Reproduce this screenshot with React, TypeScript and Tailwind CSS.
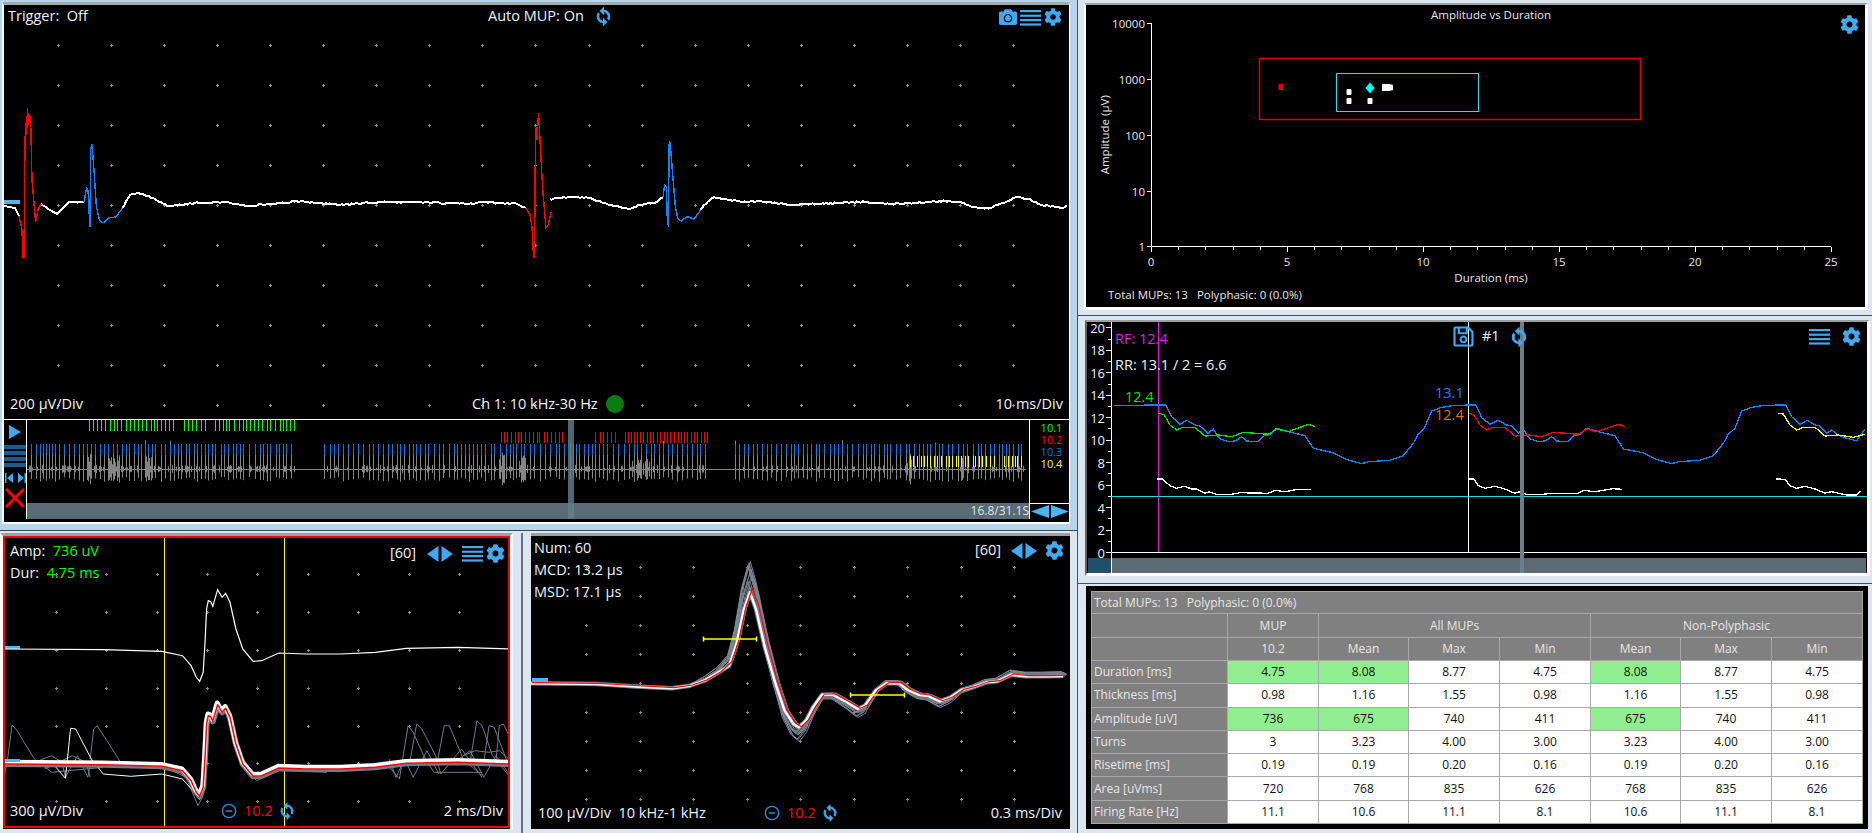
import { FaCamera, FaCog, FaRegSave } from 'react-icons/fa'
import { FiMinusCircle } from 'react-icons/fi'

type Pt = [number, number]

// zoomed crop coords -> page coords
const mapPts = (pts: number[][], ox: number, oy: number, sx: number, sy = 3): Pt[] =>
  pts.map(([x, y]) => [ox + x / sx, oy + y / sy] as Pt)

const toPath = (pts: Pt[]) =>
  pts.map(([x, y], i) => `${i ? 'L' : 'M'}${x.toFixed(1)} ${y.toFixed(1)}`).join('')

function rng(seed: number) {
  let s = seed
  return () => {
    s = (s + 0x6d2b79f5) | 0
    let t = Math.imul(s ^ (s >>> 15), 1 | s)
    t = (t + Math.imul(t ^ (t >>> 7), 61 | t)) ^ t
    return ((t ^ (t >>> 14)) >>> 0) / 4294967296
  }
}

// break a polyline into short noisy steps, gives the sampled look of the trace
function roughen(pts: Pt[], step: number, amp: number, seed: number): Pt[] {
  const r = rng(seed)
  const out: Pt[] = []
  for (let i = 0; i < pts.length - 1; i++) {
    const [x0, y0] = pts[i]
    const [x1, y1] = pts[i + 1]
    const n = Math.max(1, Math.round((x1 - x0) / step))
    for (let k = 0; k < n; k++) {
      const t = k / n
      out.push([x0 + (x1 - x0) * t, y0 + (y1 - y0) * t + (k ? (r() - 0.5) * amp : 0)])
    }
  }
  out.push(pts[pts.length - 1])
  return out
}

const BLUE = '#42a8f0'

function Dots({ xs, ys }: { xs: number[]; ys: number[] }) {
  let d = ''
  xs.forEach((x) => ys.forEach((y) => {
    const px = Math.round(x) + 0.5
    const py = Math.round(y) + 0.5
    d += `M${px - 1.5} ${py}h3M${px} ${py - 1.5}v3`
  }))
  return <path d={d} stroke="#8a8a8a" strokeWidth={1} fill="none" />
}

function MenuIcon({ w = 21 }: { w?: number }) {
  return (
    <svg width={w} height={17} viewBox="0 0 21 17" fill={BLUE}>
      <rect y="1" width="21" height="2.2" />
      <rect y="5.6" width="21" height="2.2" />
      <rect y="10" width="21" height="2.2" />
      <rect y="14.4" width="21" height="2.2" />
    </svg>
  )
}

function LeftRight({ className = '' }: { className?: string }) {
  return (
    <svg width={26} height={16} viewBox="0 0 26 16" fill={BLUE} className={className}>
      <path d="M0 8 11.5 0v16z" />
      <path d="M14.5 0 26 8 14.5 16z" />
    </svg>
  )
}

function SyncIcon({ size = 18, className = '' }: { size?: number; className?: string }) {
  return (
    <svg width={size} height={size} viewBox="2 0 20 24" fill={BLUE} stroke={BLUE} strokeWidth={1.3} className={className}>
      <path d="M12 4V1L8 5l4 4V6c3.31 0 6 2.69 6 6 0 1.01-.25 1.97-.7 2.8l1.46 1.46C19.54 15.03 20 13.57 20 12c0-4.42-3.58-8-8-8zm0 14c-3.31 0-6-2.69-6-6 0-1.01.25-1.97.7-2.8L5.24 7.74C4.46 8.97 4 10.43 4 12c0 4.42 3.58 8 8 8v3l4-4-4-4v3z" />
    </svg>
  )
}

function range(start: number, step: number, n: number) {
  return Array.from({ length: n }, (_, i) => start + i * step)
}

/* ---------- main raw signal ---------- */

const mainWhite1 = roughen(
  [[41, 204], [50, 210], [57, 214], [63, 208], [69, 202], [84, 202]],
  1.6, 1, 2,
)
const mainWhite2 = roughen(
  [[122.5, 208], [130, 195], [138, 193], [153, 198], [168, 206], [199, 203], [226, 202], [249, 206], [302, 201], [340, 205], [383, 202], [413, 202], [467, 204], [482, 202], [517, 204], [526, 208]],
  2, 1.6, 3,
)
const mainWhite3 = roughen(
  mapPts(
    [[-120, 238], [-60, 230], [0, 233], [40, 248], [70, 258], [120, 267], [150, 255], [200, 245], [218, 232]],
    590, 120, 2.985,
  ),
  2, 1.4, 4,
)
const mainWhite4 = roughen(
  mapPts(
    [[330, 270], [340, 255], [370, 232], [400, 237], [450, 245], [520, 245], [600, 254], [700, 251], [820, 245], [900, 253], [1060, 243], [1110, 248], [1140, 260], [1190, 266], [1230, 250], [1270, 232], [1310, 238], [1350, 255], [1410, 264], [1433, 255]],
    590, 120, 2.985,
  ),
  2, 1.6, 5,
)
const mainLead: Pt[] = [[4, 206], [15, 208], [19, 216]]
const mainRed1: Pt[] = [[19, 216], [22, 230], [23, 257], [24, 257], [25, 140], [26, 123], [26.6, 135], [27.5, 108], [28.5, 125], [29.5, 116], [30.6, 118], [32, 180], [33.7, 200], [35.6, 222], [38, 210], [41, 204]]
const mainRed2: Pt[] = [[526, 208], [530, 215], [532, 227], [533.5, 257], [534.5, 257], [535.5, 130], [536.5, 127], [537, 140], [538.5, 113], [539.5, 130], [540.5, 150], [543, 193], [546, 228], [548, 226], [551, 212]]
const mainBlue1: Pt[] = [[84, 202], [86.5, 188], [88, 190], [89, 210], [90, 227], [90.6, 150], [92, 144], [94, 170], [96.4, 207], [99.5, 220], [103, 223], [109, 218], [116, 217], [122.5, 208]]
const mainBlue2 = mapPts(
  [[218, 232], [223, 195], [228, 200], [231, 310], [234, 315], [236, 75], [239, 65], [243, 115], [248, 180], [255, 260], [262, 295], [272, 303], [290, 290], [310, 297], [330, 270]],
  590, 120, 2.985,
)

/* ---------- firing strip ---------- */

function makeTicks(ranges: number[][], step: number, jitter: number, seed: number) {
  const r = rng(seed)
  const out: number[] = []
  ranges.forEach(([a, b]) => {
    let x = a
    while (x <= b) {
      out.push(Math.round(x))
      x += step + r() * jitter
    }
  })
  return out
}

const ticksD = (xs: number[], y0: number, y1: number) => xs.map((x) => `M${x + 0.5} ${y0}V${y1}`).join('')

const greenTicks = makeTicks([[90, 175], [185, 208], [216, 298]], 3, 2, 11)
const redTicks = makeTicks([[502, 512], [516, 528], [530, 566], [596, 604], [608, 616], [626, 708]], 2.6, 2, 12)
const blueTicks = makeTicks([[32, 297], [325, 708], [736, 1025]], 3, 2.8, 13)
const yellowTicks = makeTicks([[911, 996], [1005, 1025]], 2.6, 2, 14)

const grayLines = (() => {
  const r = rng(21)
  let d = ''
  blueTicks.forEach((x) => {
    const top = r() < 0.06 ? 441 + r() * 8 : 456
    const bot = 478 + r() * 5
    d += `M${x + 0.5} ${top}V${bot}`
  })
  // busy stretches around the zero line
  const clump = (a: number, b: number, n: number, amp: number) => {
    for (let i = 0; i < n; i++) {
      const x = Math.round(a + r() * (b - a)) + 0.5
      const h = 1 + r() * amp
      d += `M${x} ${470 - h}V${470 + h}`
    }
  }
  clump(30, 297, 120, 3)
  clump(325, 708, 120, 3)
  clump(736, 1025, 70, 2.5)
  clump(88, 94, 10, 16)
  clump(110, 120, 16, 13)
  clump(146, 152, 10, 14)
  clump(500, 506, 10, 16)
  clump(520, 528, 10, 13)
  clump(630, 650, 20, 10)
  clump(908, 914, 8, 18)
  clump(960, 970, 8, 12)
  return d
})()

/* ---------- unit panel ---------- */

const unitTop = mapPts(
  [[12, 360], [300, 362], [470, 367], [530, 380], [555, 410], [570, 445], [580, 457], [590, 430], [596, 330], [600, 240], [605, 215], [612, 218], [618, 232], [632, 182], [645, 205], [655, 193], [668, 220], [685, 300], [705, 360], [735, 397], [760, 395], [810, 372], [890, 375], [990, 375], [1090, 370], [1180, 358], [1330, 355], [1478, 360]],
  0, 530, 2.904,
)
const unitLow = unitTop.map(([x, y]) => [x, y + 115] as Pt)
const unitLowWhite = unitTop.map(([x, y]) => [x - 0.5, y + 113] as Pt)
const unitOutliers = [
  [[12, 745], [22, 690], [35, 588], [50, 605], [70, 640], [100, 690], [150, 730], [300, 715]],
  [[262, 690], [272, 600], [282, 590], [320, 650], [350, 700], [430, 715]],
  [[100, 700], [150, 680], [180, 700], [190, 745], [225, 680], [255, 745], [265, 690]],
  [[1120, 700], [1160, 750], [1185, 590], [1200, 610], [1230, 680], [1260, 730], [1400, 730]],
  [[1190, 700], [1210, 585], [1225, 600], [1265, 680], [1280, 735], [1340, 660], [1400, 745]],
  [[1270, 700], [1290, 590], [1305, 590], [1345, 690], [1400, 740]],
  [[1365, 700], [1385, 575], [1400, 590], [1430, 680], [1478, 740]],
  [[1405, 700], [1420, 590], [1435, 595], [1470, 690], [1478, 700]],
  [[1440, 700], [1450, 590], [1462, 585], [1478, 620]],
  [[1345, 680], [1380, 665], [1420, 670], [1450, 665], [1478, 690]],
  [[1130, 690], [1150, 745], [1175, 690], [1200, 745], [1240, 665], [1275, 735]],
  [[1320, 700], [1365, 665], [1405, 745], [1440, 680], [1478, 735]],
  [[130, 720], [210, 680], [250, 700], [262, 745]],
  [[480, 715], [540, 745], [575, 830], [590, 800]],
  [[660, 560], [680, 640], [700, 700], [745, 755], [810, 725], [950, 730]],
].map((l) => mapPts(l, 0, 530, 2.904))
const unitWhiteSpike = mapPts([[150, 700], [190, 748], [205, 598], [220, 600], [240, 640], [265, 690], [300, 735], [380, 742], [470, 735], [530, 750], [560, 785], [580, 812]], 0, 530, 2.904)

/* ---------- raster panel ---------- */

const rasterZ = [[30, 458], [220, 460], [340, 468], [430, 473], [480, 465], [520, 450], [560, 425], [590, 395], [610, 330], [630, 230], [648, 175], [665, 225], [690, 340], [720, 460], [745, 540], [770, 580], [785, 590], [805, 570], [825, 530], [850, 492], [880, 492], [920, 515], [950, 535], [970, 525], [1000, 480], [1030, 458], [1065, 458], [1090, 478], [1120, 492], [1145, 495], [1180, 512], [1210, 500], [1240, 478], [1270, 470], [1310, 455], [1340, 452], [1380, 432], [1420, 437], [1470, 437], [1525, 436]]
const rasterRed = mapPts(rasterZ, 520, 530, 2.8)
const rasterWhite = mapPts(rasterZ.map(([x, y]) => [x - 7, y < 400 ? y + 12 : y + 2]), 520, 530, 2.8)
const rasterGhosts = range(0, 1, 16).map((i) => {
  const r = rng(40 + i)
  const k = 0.96 + (i / 15) * 0.34
  const dx = (r() - 0.5) * 18 - 5
  const dy = (r() - 0.5) * 12
  return mapPts(rasterZ.map(([x, y]) => [x + dx, 458 + (y - 458) * k + dy * (x > 500 ? 1 : 0.2)]), 520, 530, 2.8)
})

/* ---------- trend panel ---------- */

const trendBlue = [
  ...mapPts([[117, 272], [205, 272], [208, 270], [272, 270], [290, 305], [315, 328], [335, 316], [360, 330], [375, 333], [398, 355], [415, 343], [435, 372], [460, 380], [480, 378], [500, 365], [515, 378], [550, 380], [565, 363], [585, 358], [605, 340], [640, 350], [690, 362], [715, 400], [775, 413], [810, 432], [860, 446], [880, 440], [945, 436], [985, 422], [1015, 385], [1030, 358], [1048, 340], [1070, 288], [1100, 277], [1140, 271]], 1075, 315, 3),
  ...mapPts([[78, 270], [95, 308], [120, 328], [145, 316], [170, 330], [185, 333], [205, 355], [220, 343], [240, 372], [265, 380], [285, 378], [305, 365], [320, 378], [355, 380], [370, 363], [390, 358], [410, 340], [445, 350], [495, 362], [520, 402], [580, 413], [615, 432], [665, 446], [685, 440], [750, 436], [790, 422], [820, 385], [835, 358], [855, 340], [875, 288], [905, 277], [945, 271], [1008, 270], [1025, 305], [1050, 328], [1072, 316], [1095, 330], [1110, 333], [1130, 355], [1145, 345], [1165, 360], [1190, 370], [1220, 377], [1245, 342]], 1450, 315, 3),
]
const trendGreen = mapPts([[252, 295], [268, 300], [285, 330], [305, 345], [320, 338], [360, 338], [390, 363], [430, 360], [470, 365], [505, 352], [580, 358], [605, 342], [640, 350], [700, 328], [720, 335]], 1075, 315, 3)
const trendRed = mapPts([[57, 295], [72, 300], [90, 330], [110, 345], [125, 338], [165, 338], [195, 363], [235, 360], [275, 365], [310, 352], [385, 358], [410, 342], [440, 350], [505, 328], [525, 335]], 1450, 315, 3)
const trendYellow = mapPts([[985, 295], [1000, 297], [1020, 330], [1040, 345], [1060, 337], [1095, 337], [1125, 363], [1165, 360], [1210, 367], [1245, 358]], 1450, 315, 3)
const trendWhite = [
  mapPts([[247, 492], [262, 492], [285, 512], [305, 520], [328, 514], [350, 522], [365, 522], [390, 535], [402, 530], [425, 538], [470, 538], [495, 533], [580, 535], [600, 526], [630, 530], [670, 523], [707, 523]], 1075, 315, 3),
  mapPts([[57, 492], [72, 492], [85, 512], [105, 520], [135, 514], [165, 522], [195, 535], [210, 530], [230, 538], [280, 538], [305, 535], [385, 535], [400, 526], [435, 530], [490, 521], [515, 523]], 1450, 315, 3),
  mapPts([[978, 492], [1005, 493], [1020, 512], [1040, 520], [1065, 514], [1095, 522], [1125, 534], [1145, 530], [1190, 540], [1220, 540], [1232, 528]], 1450, 315, 3),
]

/* ---------- table ---------- */

const rows = [
  { label: 'Duration [ms]', v: ['4.75', '8.08', '8.77', '4.75', '8.08', '8.77', '4.75'], green: true },
  { label: 'Thickness [ms]', v: ['0.98', '1.16', '1.55', '0.98', '1.16', '1.55', '0.98'] },
  { label: 'Amplitude [uV]', v: ['736', '675', '740', '411', '675', '740', '411'], green: true },
  { label: 'Turns', v: ['3', '3.23', '4.00', '3.00', '3.23', '4.00', '3.00'] },
  { label: 'Risetime [ms]', v: ['0.19', '0.19', '0.20', '0.16', '0.19', '0.20', '0.16'] },
  { label: 'Area [uVms]', v: ['720', '768', '835', '626', '768', '835', '626'] },
  { label: 'Firing Rate [Hz]', v: ['11.1', '10.6', '11.1', '8.1', '10.6', '11.1', '8.1'] },
]

function MupTable() {
  const head = 'border border-[#a8a8a8] bg-[#808080] text-center font-normal text-[#e6e6e6]'
  const cell = 'border border-[#a8a8a8] text-center text-[#111]'
  return (
    <table className="w-full table-fixed border-collapse text-[12px] leading-none">
      <colgroup>
        <col className="w-[136px]" />
        <col className="w-[91px]" />
        <col className="w-[90px]" />
        <col className="w-[91px]" />
        <col className="w-[91px]" />
        <col className="w-[90px]" />
        <col className="w-[91px]" />
        <col />
      </colgroup>
      <tbody>
        <tr className="h-[22px]">
          <td colSpan={8} className="border border-[#a8a8a8] bg-[#808080] pl-[2px] text-[#e6e6e6]">
            Total MUPs: 13 &nbsp; Polyphasic: 0 (0.0%)
          </td>
        </tr>
        <tr className="h-[24px]">
          <td className={head} />
          <td className={head}>MUP</td>
          <td colSpan={3} className={head}>All MUPs</td>
          <td colSpan={3} className={head}>Non-Polyphasic</td>
        </tr>
        <tr className="h-[23px]">
          <td className={head} />
          <td className={head}>10.2</td>
          <td className={head}>Mean</td>
          <td className={head}>Max</td>
          <td className={head}>Min</td>
          <td className={head}>Mean</td>
          <td className={head}>Max</td>
          <td className={head}>Min</td>
        </tr>
        {rows.map((row) => (
          <tr key={row.label} className="h-[23.3px]">
            <td className="border border-[#a8a8a8] bg-[#808080] pl-[2px] text-[#e6e6e6]">{row.label}</td>
            {row.v.map((val, i) => (
              <td
                key={i}
                className={`${cell} ${row.green && (i === 0 || i === 1 || i === 4) ? 'bg-[#90ee90]' : 'bg-white'}`}
              >
                {val}
              </td>
            ))}
          </tr>
        ))}
      </tbody>
    </table>
  )
}

/* ---------- page ---------- */

export default function App() {
  const bigDotsX = range(57.5, 53.1, 19)
  const bigDotsY = range(44.5, 40, 10)

  return (
    <div className="flex h-[833px] w-[1872px] overflow-hidden bg-[#dce6f1] font-['Open_Sans',sans-serif] text-[14.5px] leading-none text-[#eef3f8]">
      {/* left side */}
      <div className="flex w-[1078px] flex-col border-r border-[#46515b]">
        <div className="h-[531px] border-b border-[#3f4a54] bg-[#b8d6ea] pl-[2px] pt-[2px]">
          <div className="h-[522px] w-[1068px] border-t-[3px] border-r-[1px] border-b-[2px] border-l-[2px] border-t-[#a8a8a8] border-r-white border-b-white border-l-white bg-black">
            {/* scope */}
            <div className="relative h-[415px] border-b border-white">
              <svg width={1063} height={414} viewBox="4 5 1063 414" className="block">
                <Dots xs={bigDotsX} ys={bigDotsY} />
                <g fill="none" shapeRendering="crispEdges">
                  <path d={toPath(mainLead)} stroke="#fff" strokeWidth={2} />
                  <path d={toPath(mainWhite1)} stroke="#fff" strokeWidth={2} />
                  <path d={toPath(mainWhite2)} stroke="#fff" strokeWidth={2} />
                  <path d={toPath(mainWhite3)} stroke="#fff" strokeWidth={2} />
                  <path d={toPath(mainWhite4)} stroke="#fff" strokeWidth={2} />
                  <path d={toPath(mainRed1)} stroke="#ff0000" strokeWidth={1.4} />
                  <path d={toPath(mainRed2)} stroke="#ff0000" strokeWidth={1.4} />
                  <path d={toPath(mainBlue1)} stroke="#0a84ff" strokeWidth={1.4} />
                  <path d={toPath(mainBlue2)} stroke="#0a84ff" strokeWidth={1.4} />
                </g>
                <rect x="4" y="200" width="16" height="4" fill="#55b4f5" />
              </svg>
              <div className="absolute inset-0 flex flex-col justify-between">
                <div className="flex items-start px-[4px] pt-[4px]">
                  <span className="w-[480px]">Trigger: &nbsp;Off</span>
                  <span>Auto MUP: On</span>
                  <SyncIcon size={19} className="ml-[10px] -mt-[2px]" />
                  <div className="ml-auto mr-[3px] -mt-[1px] flex items-center gap-[3px]">
                    <FaCamera size={18} color={BLUE} />
                    <MenuIcon />
                    <FaCog size={18} color={BLUE} />
                  </div>
                </div>
                <div className="flex items-center px-[6px] pb-[6px]">
                  <span className="w-[462px]">200 µV/Div</span>
                  <span>Ch 1: 10 kHz-30 Hz</span>
                  <span className="ml-[8px] h-[18px] w-[18px] rounded-full bg-[#0b7d10]" />
                  <span className="ml-auto">10 ms/Div</span>
                </div>
              </div>
            </div>
            {/* firing strip */}
            <div className="flex h-[99px]">
              <div className="flex w-[23px] flex-col items-center border-r border-white">
                <svg width={14} height={16} viewBox="0 0 14 16" className="mt-[4px]" fill={BLUE}>
                  <path d="M1 1 13 8 1 15z" />
                </svg>
                <svg width={22} height={22} viewBox="0 0 22 22" className="mt-[5px]" fill="#1a5a8c">
                  <rect y="0" width="22" height="4" />
                  <rect y="6" width="22" height="4" />
                  <rect y="12" width="22" height="4" />
                  <rect y="18" width="22" height="4" />
                </svg>
                <svg width={21} height={12} viewBox="0 0 21 12" className="mt-[5px]" fill={BLUE}>
                  <rect x="0" y="1" width="1.5" height="10" />
                  <rect x="19.5" y="1" width="1.5" height="10" />
                  <path d="M2 6 8 1v10zM19 6l-6-5v10z" />
                </svg>
                <svg width={20} height={20} viewBox="0 0 20 20" className="mt-[4px]" stroke="#ff0000" strokeWidth={3}>
                  <path d="M1 1 19 19M19 1 1 19" />
                </svg>
              </div>
              <div className="relative flex-1">
                <svg width={999} height={83} viewBox="28 421 999 83" className="block" fill="none">
                  <path d={grayLines} stroke="#858585" />
                  <path d="M28 470.5H1027" stroke="#858585" />
                  <path d={ticksD(greenTicks, 421, 432)} stroke="#00ff00" />
                  <path d={ticksD(redTicks, 433, 444)} stroke="#ff0000" />
                  <path d={ticksD(blueTicks, 445, 456)} stroke="#0a78e6" />
                  <path d={ticksD(yellowTicks, 457, 468)} stroke="#ffff00" />
                </svg>
                <div className="flex h-[16px] items-center justify-end bg-[#5a6b73] text-[12px] text-[#dfe6ea]">
                  16.8/31.1S
                </div>
                <div className="absolute bottom-0 left-[541px] top-0 w-[6px] bg-[#64808c]/80" />
              </div>
              <div className="flex w-[40px] flex-col border-l border-white">
                <div className="flex h-[83px] flex-col items-center pt-[2px] pl-[4px] text-[11px] leading-[12px]">
                  <span className="text-[#00ff00]">10.1</span>
                  <span className="text-[#ff0000]">10.2</span>
                  <span className="text-[#0a78e6]">10.3</span>
                  <span className="text-[#ffff00]">10.4</span>
                </div>
                <div className="flex flex-1 items-center justify-center border-t border-white">
                  <svg width={38} height={13} viewBox="0 0 38 13" fill="#4ab4fa">
                    <path d="M0 6.5 18 0v13zM38 6.5 20 0v13z" />
                  </svg>
                </div>
              </div>
            </div>
          </div>
        </div>

        <div className="flex flex-1 pt-[2px]">
          {/* unit panel */}
          <div className="h-[296px] w-[513px] border-t-[3px] border-r-[3px] border-l-[3px] border-t-[#9aa0a6] border-r-white border-l-white bg-black">
            <div className="relative h-[292px] border-2 border-[#ff0000]">
              <svg width={503} height={288} viewBox="5 539 503 288" className="block" fill="none">
                <Dots xs={range(55.8, 50.4, 9)} ys={range(575.3, 37.8, 7)} />
                <path d="M164.5 539V827M284.5 539V827" stroke="#ffff00" />
                <rect x="4" y="647" width="16" height="3" fill="#55b4f5" />
                <path d={toPath(unitTop)} stroke="#fff" strokeWidth={1.2} />
                {unitOutliers.map((l, i) => (
                  <path key={i} d={toPath(l)} stroke="#6f7d8a" strokeWidth={1} />
                ))}
                <path d={toPath(unitWhiteSpike)} stroke="#fff" strokeWidth={1} />
                <path d={toPath(unitLow)} stroke="#6f7d8a" strokeWidth={6} strokeLinejoin="round" />
                <path d={toPath(unitLowWhite)} stroke="#fff" strokeWidth={4.5} strokeLinejoin="round" />
                <path d={toPath(unitLow)} stroke="#ff0000" strokeWidth={1.5} strokeLinejoin="round" />
                <rect x="4" y="760" width="16" height="3" fill="#55b4f5" />
              </svg>
              <div className="absolute inset-0 flex flex-col justify-between">
                <div className="flex items-start pl-[5px] pr-[3px] pt-[6px]">
                  <div className="flex flex-col gap-[7.5px]">
                    <span>Amp: &nbsp;<span className="text-[#00ff00]">736 uV</span></span>
                    <span>Dur: &nbsp;<span className="text-[#00ff00]">4.75 ms</span></span>
                  </div>
                  <div className="ml-auto flex items-center gap-[3px]">
                    <span className="mr-[8px]">[60]</span>
                    <LeftRight className="mr-[6px]" />
                    <MenuIcon />
                    <FaCog size={19} color={BLUE} />
                  </div>
                </div>
                <div className="flex items-center px-[5px] pb-[6px]">
                  <span className="w-[211px]">300 µV/Div</span>
                  <FiMinusCircle size={16} color="#2f8fd0" />
                  <span className="ml-[7px] text-[#ff0000]">10.2</span>
                  <SyncIcon size={18} className="ml-[5px]" />
                  <span className="ml-auto">2 ms/Div</span>
                </div>
              </div>
            </div>
          </div>
          <div className="ml-[8px] h-full w-[2px] bg-[#6a7076]" />
          {/* raster panel */}
          <div className="ml-[8px] h-[296px] w-[539px] border-t-[3px] border-t-[#9aa0a6] bg-black">
            <div className="relative h-[293px]">
              <svg width={539} height={293} viewBox="530 536 539 293" className="block" fill="none">
                <Dots xs={range(585.4, 53.5, 9)} ys={range(566.7, 29, 9)} />
                {rasterGhosts.map((l, i) => (
                  <path key={i} d={toPath(l)} stroke="#7a8794" strokeWidth={1} />
                ))}
                <path d={toPath(rasterWhite)} stroke="#6f7d8a" strokeWidth={4.5} strokeLinejoin="round" />
                <path d={toPath(rasterWhite)} stroke="#fff" strokeWidth={2.4} strokeLinejoin="round" />
                <path d={toPath(rasterRed)} stroke="#ff0000" strokeWidth={1.2} strokeLinejoin="round" />
                <rect x="531" y="678" width="16" height="4" fill="#55b4f5" />
                <path d="M702 639H756M702.5 636.5v5M755.5 636.5v5M849 695H904M849.5 692.5v5M903.5 692.5v5" stroke="#ffff00" strokeWidth={1.6} />
              </svg>
              <div className="absolute inset-0 flex flex-col justify-between">
                <div className="flex items-start pl-[3px] pr-[6px] pt-[5px]">
                  <div className="flex flex-col gap-[7.5px]">
                    <span>Num: 60</span>
                    <span>MCD: 13.2 µs</span>
                    <span>MSD: 17.1 µs</span>
                  </div>
                  <div className="ml-auto flex items-center">
                    <span className="mr-[10px]">[60]</span>
                    <LeftRight className="mr-[8px]" />
                    <FaCog size={19} color={BLUE} />
                  </div>
                </div>
                <div className="flex items-center pl-[7px] pr-[8px] pb-[7px]">
                  <span className="w-[226px]">100 µV/Div &nbsp;10 kHz-1 kHz</span>
                  <FiMinusCircle size={16} color="#2f8fd0" />
                  <span className="ml-[7px] text-[#ff0000]">10.2</span>
                  <SyncIcon size={18} className="ml-[5px]" />
                  <span className="ml-auto">0.3 ms/Div</span>
                </div>
              </div>
            </div>
          </div>
        </div>
      </div>

      {/* right side */}
      <div className="flex flex-1 flex-col">
        <div className="h-[316px] border-b border-[#46515b] pl-[6px] pt-[3px]">
          <div className="h-[307px] w-[784px] border-t-2 border-r-[3px] border-b-[3px] border-l-2 border-t-[#a0a0a0] border-r-white border-b-white border-l-white bg-black">
            <div className="relative h-[302px] text-[11.5px] text-[#e8e8e8]">
              <svg width={779} height={302} viewBox="1086 5 779 302" className="block" fill="none">
                <path d="M1151.5 23V246.5H1831" stroke="#fff" />
                {[23, 79, 135, 191, 246].map((y) => (
                  <path key={y} d={`M1147 ${y + 0.5}H1151`} stroke="#fff" />
                ))}
                {range(0, 1, 26).map((i) => (
                  <path key={i} d={`M${Math.round(1151 + i * 27.2) + 0.5} 247V${i % 5 === 0 ? 252 : 250}`} stroke="#fff" />
                ))}
                <rect x="1259.5" y="58.5" width="381" height="61" stroke="#e00000" strokeWidth={1.5} />
                <rect x="1336.5" y="73.5" width="142" height="38" stroke="#22e0f0" />
                <rect x="1278.5" y="84" width="5" height="6" fill="#e00000" />
                <rect x="1346.5" y="89" width="5" height="6" rx="1" fill="#fff" />
                <rect x="1346.5" y="98" width="5" height="6" rx="1" fill="#fff" />
                <rect x="1367.5" y="98" width="5" height="6" rx="1" fill="#fff" />
                <path d="M1370 82.5 1374.5 88 1370 93.5 1365.5 88z" fill="#00ffff" />
                <rect x="1382" y="84" width="8" height="7" fill="#fff" />
                <rect x="1388" y="84.5" width="5" height="6" rx="1" fill="#fff" />
              </svg>
              {/* axis labels sit on the plot */}
              <span className="absolute left-[345px] w-[120px] top-[4px] whitespace-nowrap text-center">Amplitude vs Duration</span>
              <FaCog size={19} color={BLUE} className="absolute right-[6px] top-[10px]" />
              {[['10000', 12], ['1000', 68], ['100', 124], ['10', 180], ['1', 235]].map(([t, y]) => (
                <span key={t} className="absolute right-[720px]" style={{ top: Number(y) + 1 }}>{t}</span>
              ))}
              {[0, 5, 10, 15, 20, 25].map((t, i) => (
                <span key={t} className="absolute top-[251px] w-[30px] text-center" style={{ left: 50 + i * 136 }}>{t}</span>
              ))}
              <span className="absolute left-[345px] w-[120px] top-[267px] text-center">Duration (ms)</span>
              <span className="absolute left-[22px] top-[284px]">Total MUPs: 13 &nbsp; Polyphasic: 0 (0.0%)</span>
              <span className="absolute left-[-26px] top-[124px] w-[90px] -rotate-90 text-center">Amplitude (µV)</span>
            </div>
          </div>
        </div>

        <div className="h-[268px] border-b border-[#46515b] pl-[7px] pt-[4px]">
          <div className="h-[256px] w-[785px] border-t-2 border-r-[3px] border-b-[3px] border-l-2 border-t-[#a0a0a0] border-r-white border-b-white border-l-[#5a6068] bg-black">
            <div className="relative h-[251px]">
              <svg width={780} height={251} viewBox="1087 322 780 251" className="block" fill="none">
                <path d="M1111.5 322V552.5H1867" stroke="#fff" />
                {range(0, 1, 21).map((i) => (
                  <path key={i} d={`M${i % 2 ? 1108 : 1106} ${(Math.round(552 - i * 11.23) + 0.5).toFixed(1)}H1111`} stroke="#fff" />
                ))}
                <rect x="1088" y="558" width="23" height="15" fill="#1f4f6a" />
                <path d="M1111.5 553V573" stroke="#fff" />
                <rect x="1112" y="558" width="754" height="15" fill="#5a6b73" />
                <path d="M1158.5 322V552" stroke="#e21be2" />
                <path d="M1468.5 322V552" stroke="#fff" />
                <path d="M1111 496.5H1867" stroke="#2ad4e0" />
                <g shapeRendering="crispEdges" strokeWidth={1.3}>
                  <path d={toPath(trendBlue)} stroke="#0a84ff" />
                  <path d={toPath(trendGreen)} stroke="#00e000" />
                  <path d={toPath(trendRed)} stroke="#ff0000" />
                  <path d={toPath(trendYellow)} stroke="#ffff00" />
                  {trendWhite.map((l, i) => (
                    <path key={i} d={toPath(l)} stroke="#fff" />
                  ))}
                </g>
                <rect x="1520" y="322" width="4" height="251" fill="#6a7f8a" />
              </svg>
              {[20, 18, 16, 14, 12, 10, 8, 6, 4, 2, 0].map((t, i) => (
                <span key={t} className="absolute right-[762px] text-[13px]" style={{ top: i * 22.46 }}>{t}</span>
              ))}
              <span className="absolute left-[28px] top-[10px] text-[#e020e0]">RF: 12.4</span>
              <span className="absolute left-[28px] top-[36px]">RR: 13.1 / 2 = 6.6</span>
              <span className="absolute left-[38px] top-[68px] text-[#00e000]">12.4</span>
              <span className="absolute left-[348px] top-[64px] text-[#0a84ff]">13.1</span>
              <span className="absolute left-[348px] top-[86px] text-[#c87a1a]">12.4</span>
              <div className="absolute left-[365px] top-[3px] flex items-center">
                <FaRegSave size={23} color={BLUE} />
                <span className="ml-[7px]">#1</span>
                <SyncIcon size={20} className="ml-[9px]" />
              </div>
              <div className="absolute right-[6px] top-[5px] flex items-center gap-[12px]">
                <MenuIcon />
                <FaCog size={19} color={BLUE} />
              </div>
            </div>
          </div>
        </div>

        <div className="pl-[8px] pt-[2px]">
          <div className="h-[243px] w-[782px] border-x-[5px] border-y-[5px] border-black bg-black">
            <MupTable />
          </div>
        </div>
      </div>
    </div>
  )
}
